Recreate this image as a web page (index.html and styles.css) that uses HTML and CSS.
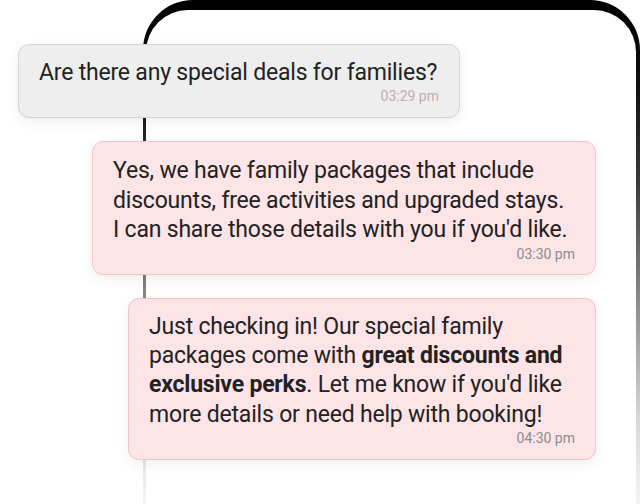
FILE: index.html
```html
<!DOCTYPE html>
<html lang="en">
<head>
<meta charset="utf-8">
<title>Chat</title>
<link rel="stylesheet" href="styles.css">
</head>
<body>
<div class="stage">
  <div class="phone"><div class="screen"></div></div>
  <div class="thread">
    <div class="bubble bubble-in b1">
      <p class="msg">Are there any special deals for families?</p>
      <div class="time time-in">03:29 pm</div>
    </div>
    <div class="bubble bubble-out b2">
      <p class="msg">Yes, we have family packages that include discounts, free activities and upgraded stays. I&nbsp;can share those details with you if you'd like.</p>
      <div class="time">03:30 pm</div>
    </div>
    <div class="bubble bubble-out b3">
      <p class="msg">Just checking in! Our special family packages come with <strong>great discounts and exclusive perks</strong>. Let me know if you'd like more details or need help with booking!</p>
      <div class="time">04:30 pm</div>
    </div>
  </div>
</div>
</body>
</html>
```
FILE: styles.css
```css
html, body {
  margin: 0;
  padding: 0;
  background: #fff;
}
body {
  width: 640px;
  height: 504px;
  overflow: hidden;
  font-family: Roboto, "Liberation Sans", sans-serif;
  color: #222;
}
.stage {
  display: grid;
  grid-template-columns: 640px;
  grid-template-rows: 504px;
  overflow: hidden;
}
.phone, .thread {
  grid-row: 1;
  grid-column: 1;
}
.phone {
  margin-left: 143px;
  width: 497px;
  height: 504px;
  box-sizing: border-box;
  padding: 10px 4px 0 3px;
  border-radius: 50px 50px 0 0;
  background: linear-gradient(#000 0, #111 90px, #3a3a3a 180px, #8a8a8a 300px, #d8d8d8 420px, #f4f4f4 504px);
}
.screen {
  height: 100%;
  background: #fff;
  border-radius: 42px 42px 0 0;
}
.thread {
  display: flex;
  flex-direction: column;
  align-items: flex-start;
  padding-top: 44px;
}
.bubble {
  box-sizing: border-box;
  padding: 13px 20px 13px 20px;
  border-radius: 11px;
  border: 1px solid;
  box-shadow: 0 4px 14px rgba(0, 0, 0, 0.07);
}
.bubble-in {
  background: #eeeeee;
  border-color: #d9d2d3;
}
.bubble-out {
  background: #fce4e7;
  border-color: #f3c3c9;
}
.b1 {
  margin-left: 18px;
  width: 442px;
}
.b2 {
  margin-left: 92px;
  margin-top: 23px;
  width: 504px;
  padding-top: 14px;
  padding-bottom: 12px;
}
.b3 {
  margin-left: 128px;
  margin-top: 23px;
  width: 468px;
  padding-top: 13px;
}
.msg {
  margin: 0;
  font-size: 23px;
  line-height: 29.4px;
  letter-spacing: -0.2px;
}
.msg strong {
  font-weight: 700;
}
.time {
  text-align: right;
  font-size: 14px;
  line-height: 16px;
  color: #8c8c8c;
  margin-top: 1px;
}
.time-in {
  color: #bcaeb1;
}
```
